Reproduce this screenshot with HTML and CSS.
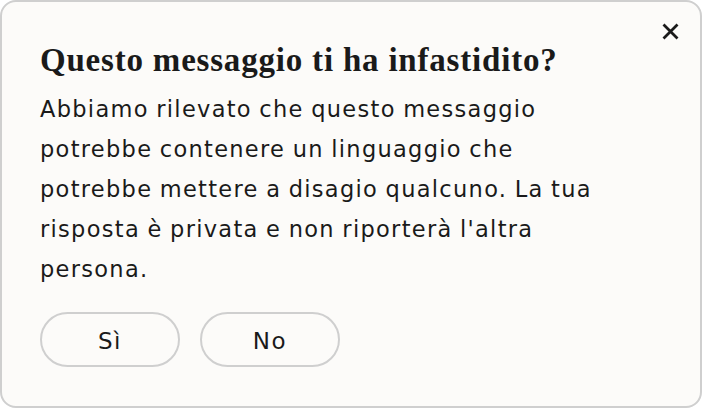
FILE: index.html
```html
<!DOCTYPE html>
<html lang="it">
<head>
<meta charset="utf-8">
<link rel="stylesheet" href="styles.css">
</head>
<body>
<div class="card">
  <button class="close" aria-label="Chiudi">
    <svg width="17" height="17" viewBox="0 0 17 17"><path d="M1.5 1.5L15.5 15.5M15.5 1.5L1.5 15.5" stroke="#1a1a1a" stroke-width="2.8" stroke-linecap="butt"/></svg>
  </button>
  <h1 class="title">Questo messaggio ti ha infastidito?</h1>
  <p class="text">Abbiamo rilevato che questo messaggio<br>potrebbe contenere un linguaggio che<br>potrebbe mettere a disagio qualcuno. La tua<br>risposta è privata e non riporterà l'altra<br>persona.</p>
  <div class="actions">
    <button class="btn">Sì</button>
    <button class="btn">No</button>
  </div>
</div>
</body>
</html>
```
FILE: styles.css
```css
html, body { margin: 0; padding: 0; background: #ffffff; }
.card {
  box-sizing: border-box;
  width: 702px;
  height: 408px;
  border: 2px solid #cfcfcf;
  border-radius: 16px;
  background: #fcfbf9;
  padding: 38px 38px 0 38px;
  position: relative;
  color: #1a1a1a;
}
.close {
  position: absolute;
  top: 21px;
  right: 21px;
  width: 17px;
  height: 17px;
  padding: 0;
  border: 0;
  background: none;
  display: flex;
}
.title {
  margin: 0;
  font-family: "Liberation Serif", serif;
  font-weight: 700;
  font-size: 33px;
  line-height: 40px;
  letter-spacing: 0.8px;
}
.text {
  margin: 9px 0 0 0;
  font-family: "DejaVu Sans", sans-serif;
  font-size: 22.5px;
  line-height: 40px;
  letter-spacing: 1.3px;
  word-spacing: -1px;
}
.actions {
  display: flex;
  gap: 20px;
  margin-top: 23px;
}
.btn {
  box-sizing: border-box;
  width: 140px;
  height: 55px;
  border: 2px solid #cfcfcf;
  border-radius: 28px;
  background: #fcfbf9;
  font-family: "DejaVu Sans", sans-serif;
  font-size: 23px;
  letter-spacing: 1.5px;
  color: #1a1a1a;
  padding: 2px 0 0 0;
}
```
